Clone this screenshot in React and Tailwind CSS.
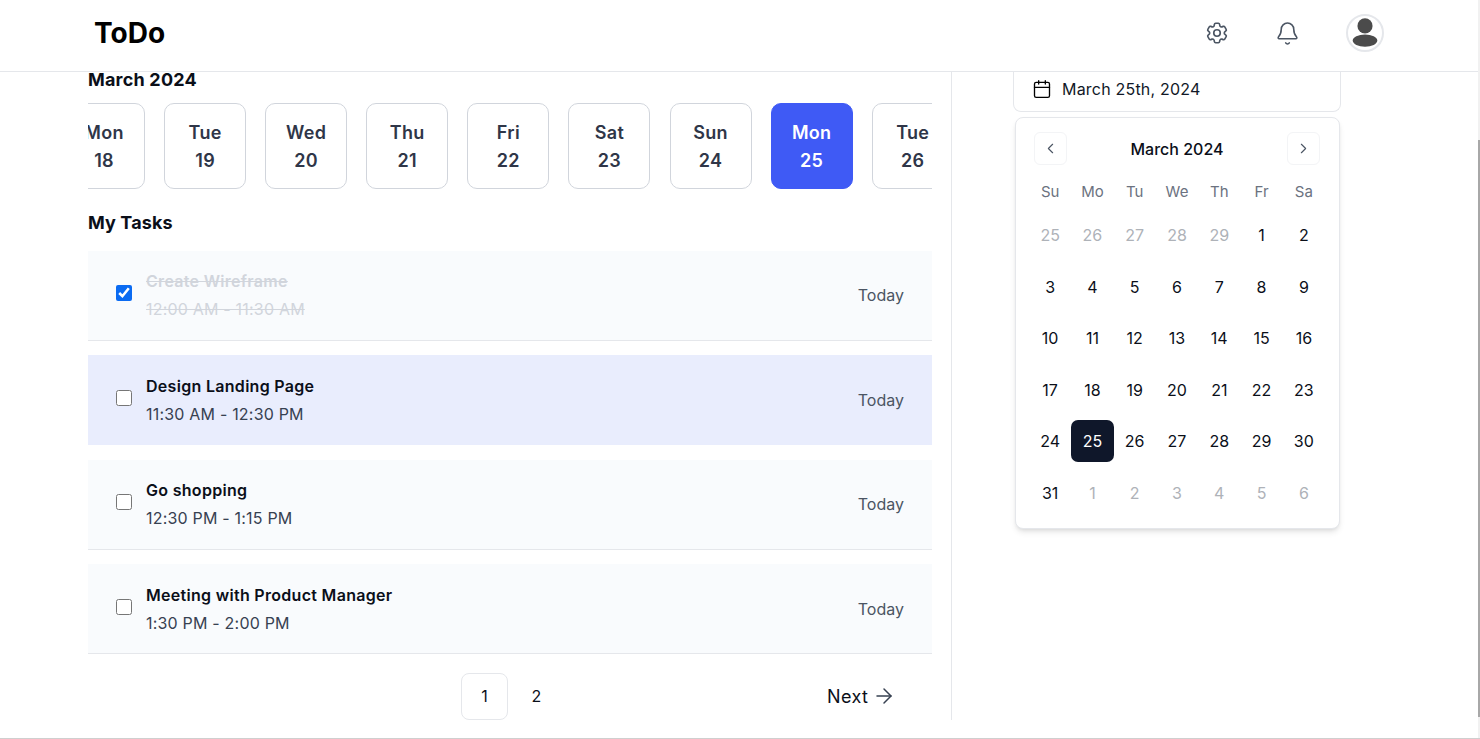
import React from 'react';
import { ArrowRight, Bell, Calendar, ChevronLeft, ChevronRight } from 'lucide-react';
import { HiOutlineCog6Tooth } from 'react-icons/hi2';

const days = [
  ['Mon', 18], ['Tue', 19], ['Wed', 20], ['Thu', 21], ['Fri', 22],
  ['Sat', 23], ['Sun', 24], ['Mon', 25], ['Tue', 26],
];

const tasks = [
  { title: 'Create Wireframe', time: '12:00 AM - 11:30 AM', done: true },
  { title: 'Design Landing Page', time: '11:30 AM - 12:30 PM', active: true },
  { title: 'Go shopping', time: '12:30 PM - 1:15 PM' },
  { title: 'Meeting with Product Manager', time: '1:30 PM - 2:00 PM' },
];

const weeks = [
  [25, 26, 27, 28, 29, 1, 2],
  [3, 4, 5, 6, 7, 8, 9],
  [10, 11, 12, 13, 14, 15, 16],
  [17, 18, 19, 20, 21, 22, 23],
  [24, 25, 26, 27, 28, 29, 30],
  [31, 1, 2, 3, 4, 5, 6],
];

const Avatar = () => (
  <div className="flex h-[38px] w-[38px] items-center justify-center overflow-hidden rounded-full border-2 border-gray-200 bg-white">
    <svg viewBox="0 0 36 36" className="h-[36px] w-[36px]" fill="#4b4b4b">
      <circle cx="18" cy="10.5" r="8" />
      <ellipse cx="18" cy="26" rx="13" ry="6.5" />
    </svg>
  </div>
);

const TaskRow = ({ task }) => (
  <div className={`flex h-[90px] items-center border-b pl-[28px] pr-[28px] ${task.active ? 'border-transparent bg-[#e9edfd]' : 'border-gray-200 bg-[#f9fbfd]'}`}>
    <input
      type="checkbox"
      readOnly
      checked={!!task.done}
      className="mb-[4px] h-[16px] w-[16px] accent-[#0b6bf2]"
    />
    <div className="ml-[14px] flex-1">
      <div className={`text-[16px] leading-[24px] font-semibold tracking-[0.3px] ${task.done ? 'text-gray-300 line-through' : 'text-[#0b0f19]'}`}>{task.title}</div>
      <div className={`mt-[4px] text-[16px] leading-[24px] tracking-[0.2px] ${task.done ? 'text-gray-300 line-through' : 'text-[#374151]'}`}>{task.time}</div>
    </div>
    <div className="text-[16px] text-[#4b5563]">Today</div>
  </div>
);

export default function App() {
  return (
    <div className="flex h-[739px] overflow-hidden border-b border-[#cfcfcf] bg-white font-['Inter',sans-serif]">
      <div className="flex min-w-0 flex-1 flex-col">
        <header className="flex h-[72px] shrink-0 items-center justify-between border-b border-gray-200 pb-[5px] pl-[94px] pr-[94px]">
          <h1 className="text-[28px] font-bold text-black">ToDo</h1>
          <div className="flex items-center">
            <HiOutlineCog6Tooth className="h-[26px] w-[26px] text-[#4b5563]" />
            <Bell className="ml-[45px] h-[25px] w-[25px] text-[#4b5563]" strokeWidth={1.5} />
            <div className="ml-[46px]"><Avatar /></div>
          </div>
        </header>

        <div className="flex h-[648px] shrink-0">
          <main className="w-[952px] shrink-0 border-r border-gray-200 pl-[88px] pr-[19px]">
            <h2 className="text-[18px] leading-[16px] font-bold tracking-[0.2px] text-[#0b0f19]">March 2024</h2>
            <div className="mt-[15px] flex gap-[19.1px] overflow-hidden">
              {days.map(([name, num], i) => (
                <div
                  key={num}
                  className={`flex h-[86px] w-[82px] shrink-0 flex-col items-center justify-center rounded-[10px] border pt-[2px] text-[18px] leading-[28px] font-semibold tracking-[0.3px] ${i === 0 ? '-ml-[25px]' : ''} ${num === 25 ? 'border-[#3f5af5] bg-[#3f5af5] text-white' : 'border-gray-300 bg-white text-[#2f3648]'}`}
                >
                  <span>{name}</span>
                  <span>{num}</span>
                </div>
              ))}
            </div>
            <h2 className="mt-[24px] text-[18px] leading-[20px] font-bold tracking-[0.1px] text-[#0b0f19]">My Tasks</h2>
            <div className="mt-[17.5px] flex flex-col gap-[14.5px]">
              {tasks.map((task) => <TaskRow key={task.title} task={task} />)}
            </div>
            <div className="mt-[18.5px] flex items-center text-[16px] text-[#0b0f19]">
              <div className="ml-[373px] flex h-[47px] w-[47px] items-center justify-center rounded-[8px] border border-gray-200">1</div>
              <div className="flex h-[47px] w-[57px] items-center justify-center">2</div>
              <div className="ml-[262px] flex items-center gap-[4px] text-[18px] tracking-[0.4px]">
                Next <ArrowRight className="h-[24px] w-[24px] text-[#374151]" strokeWidth={1.5} />
              </div>
            </div>
          </main>

          <aside className="flex-1 pl-[61px]">
            <div className="flex h-[40px] w-[328px] items-center gap-[10px] rounded-b-[8px] border border-t-0 border-gray-200 pb-[6px] pl-[18px] text-[16px] tracking-[0.2px] text-[#111827]">
              <Calendar className="h-[20px] w-[20px] text-black" strokeWidth={1.6} />
              March 25th, 2024
            </div>
            <div className="mt-[5px] ml-[2px] h-[412px] w-[325px] rounded-[8px] border border-gray-200 bg-white pl-[13px] pr-[14px] pt-[14px] shadow-md">
              <div className="flex items-center justify-between pl-[5px] pr-[5px]">
                <div className="flex h-[33px] w-[33px] items-center justify-center rounded-[6px] border border-gray-100 text-[#4b5563]"><ChevronLeft className="h-[17px] w-[17px]" strokeWidth={1.6} /></div>
                <div className="text-[16px] font-medium text-[#0b0f19]">March 2024</div>
                <div className="flex h-[33px] w-[33px] items-center justify-center rounded-[6px] border border-gray-100 text-[#4b5563]"><ChevronRight className="h-[17px] w-[17px]" strokeWidth={1.6} /></div>
              </div>
              <div className="mt-[15px] grid grid-cols-7 text-center text-[15px] leading-[24px] text-[#6b7280]">
                {['Su', 'Mo', 'Tu', 'We', 'Th', 'Fr', 'Sa'].map((d) => <div key={d}>{d}</div>)}
              </div>
              <div className="mt-[10px] flex flex-col gap-[9.6px]">
                {weeks.map((week, w) => (
                  <div key={w} className="grid grid-cols-7 text-[16px]">
                    {week.map((d) => {
                      const outside = (w === 0 && d > 7) || (w === 5 && d < 7);
                      const selected = w === 4 && d === 25;
                      return (
                        <div
                          key={d}
                          className={`flex h-[42px] items-center justify-center rounded-[7px] ${selected ? 'bg-[#0f172a] text-white' : outside ? 'text-[#aeb2b8]' : 'text-[#0b0f19]'}`}
                        >
                          {d}
                        </div>
                      );
                    })}
                  </div>
                ))}
              </div>
            </div>
          </aside>
        </div>
      </div>

      {/* thin scrollbar on the right edge */}
      <div className="h-full w-[2px] shrink-0 bg-[#f1f1f1] pt-[140px]">
        <div className="h-[577px] bg-[#a8a8a8]" />
      </div>
    </div>
  );
}
